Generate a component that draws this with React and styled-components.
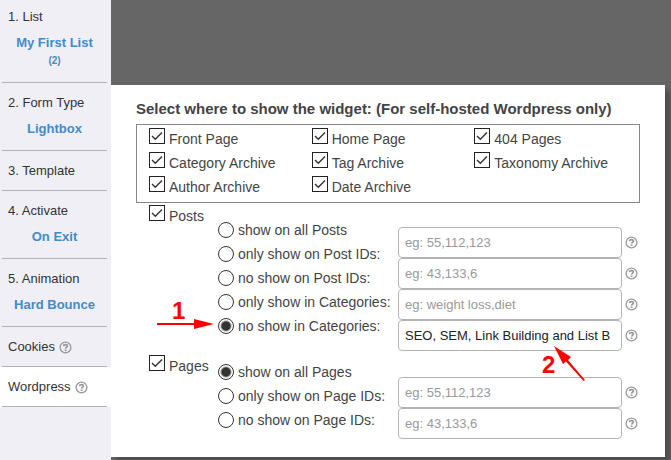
import React from "react";
import styled, { createGlobalStyle } from "styled-components";

const GlobalStyle = createGlobalStyle`
  * {
    box-sizing: border-box;
  }
  body {
    margin: 0;
    background: #666;
    color: #333;
    font-family: "Liberation Sans", Arial, sans-serif;
    font-size: 14px;
    line-height: 22px;
  }
`;

const Page = styled.div`
  display: flex;
  min-height: 100vh;
`;

const Sidebar = styled.nav`
  flex: 0 0 111px;
  background: #f0eff5;
  font-size: 13px;
  line-height: 18px;
`;

const Step = styled.div`
  padding: ${(p) => (p.$first ? "8px" : "11px")} 4px ${(p) => (p.$wide ? "13px" : "11px")} 2px;
  background: ${(p) => (p.$active ? "#fff" : "transparent")};
  position: relative;
  &::after {
    content: "";
    position: absolute;
    left: 2px;
    right: 4px;
    bottom: 0;
    border-bottom: 1px solid #b3b3b3;
  }
`;

const StepTitle = styled.div`
  display: flex;
  align-items: center;
  gap: 4px;
  padding-left: 6px;
`;

const StepLink = styled.a`
  display: block;
  margin-top: 8px;
  color: #428bca;
  font-weight: bold;
  text-align: center;
  text-decoration: none;
`;

const Count = styled.small`
  display: block;
  font-size: 10px;
`;

const Content = styled.main`
  flex: 1;
  min-width: 0;
  padding: 85px 6px 3px 0;
`;

const Panel = styled.section`
  padding: 12px 25px 18px;
  background: #fff;
  box-shadow: 5px 5px 5px rgba(0, 0, 0, 0.25);
`;

const Heading = styled.h1`
  margin: 0 0 3px;
  color: #444;
  font-size: 15px;
  line-height: 24px;
  white-space: nowrap;
`;

const Archives = styled.div`
  display: grid;
  grid-template-columns: repeat(3, 1fr);
  padding: 3px 2px 2px 12px;
  border: 1px solid #888;
`;

const Option = styled.div`
  display: flex;
  align-items: flex-start;
  gap: 4px;
  height: 24px;
  color: #444;
  white-space: nowrap;
`;

const Check = styled.input`
  appearance: none;
  flex: none;
  width: 16px;
  height: 16px;
  margin: 0;
  border: 1px solid #222;
  background: #fff;
  &:checked {
    background: url("data:image/svg+xml,%3Csvg xmlns='http://www.w3.org/2000/svg' viewBox='0 0 14 14'%3E%3Cpath d='M2 7l3.3 3.3L12 3.5' fill='none' stroke='%23333' stroke-width='1.4'/%3E%3C/svg%3E");
  }
`;

const Radio = styled.input`
  appearance: none;
  flex: none;
  width: 16px;
  height: 16px;
  margin: 3px 0 0;
  border: 1px solid #333;
  border-radius: 50%;
  background: #fff;
  &:checked {
    background: radial-gradient(circle, #333 4px, #fff 6px);
  }
`;

const Groups = styled.div`
  position: relative;
  margin-top: 2px;
`;

const Group = styled.div`
  display: grid;
  grid-template-columns: 69px 180px minmax(0, 1fr);
  min-height: ${(p) => (p.$tall ? "150px" : "0")};
  padding: 0 2px 0 13px;
`;

const Radios = styled.div`
  padding-top: ${(p) => (p.$tall ? "14px" : "6px")};
`;

const Fields = styled.div`
  padding-top: 22px;
`;

const Field = styled.div`
  display: flex;
  align-items: center;
  gap: 3px;
`;

const TextBox = styled.input`
  flex: 1;
  min-width: 0;
  height: 31px;
  padding: 0 6px;
  border: 1px solid #b3b3b3;
  border-radius: 4px;
  color: #222;
  font: 13px "Liberation Sans", Arial, sans-serif;
  &::placeholder {
    color: #999;
    opacity: 1;
  }
`;

// red callouts that lie over the form
const Marker = styled.svg`
  position: absolute;
  left: ${(p) => p.$left};
  top: ${(p) => p.$top};
  overflow: visible;
  pointer-events: none;
  fill: #f00;
  font-size: 24px;
  font-weight: bold;
`;

const HelpSvg = styled.svg`
  flex: none;
  display: block;
`;

const Help = () => (
  <HelpSvg width="13" height="13" viewBox="0 0 13 13" fill="none" stroke="#999" role="img" aria-label="Help">
    <circle cx="6.5" cy="6.5" r="5.4" strokeWidth="1.3" />
    <path d="M4.5 5.2C4.6 4.1 5.4 3.6 6.4 3.6c1.2 0 2 .6 2 1.5 0 1.2-1.8 1.2-1.8 2.5" strokeWidth="1.7" />
    <path d="M6.6 8.4v1.6" strokeWidth="1.8" />
  </HelpSvg>
);

const steps = [
  { title: "1. List", value: "My First List", count: "(2)" },
  { title: "2. Form Type", value: "Lightbox" },
  { title: "3. Template" },
  { title: "4. Activate", value: "On Exit" },
  { title: "5. Animation", value: "Hard Bounce" },
  { title: "Cookies", help: true },
  { title: "Wordpress", help: true, active: true },
];

const archives = [
  "Front Page",
  "Home Page",
  "404 Pages",
  "Category Archive",
  "Tag Archive",
  "Taxonomy Archive",
  "Author Archive",
  "Date Archive",
];

const groups = [
  {
    name: "Posts",
    tall: true,
    selected: 4,
    options: [
      "show on all Posts",
      "only show on Post IDs:",
      "no show on Post IDs:",
      "only show in Categories:",
      "no show in Categories:",
    ],
    fields: [
      { hint: "eg: 55,112,123" },
      { hint: "eg: 43,133,6" },
      { hint: "eg: weight loss,diet" },
      { value: "SEO, SEM, Link Building and List B" },
    ],
  },
  {
    name: "Pages",
    selected: 0,
    options: ["show on all Pages", "only show on Page IDs:", "no show on Page IDs:"],
    fields: [{ hint: "eg: 55,112,123" }, { hint: "eg: 43,133,6" }],
  },
];

const CheckOption = ({ label }) => {
  const id = label.toLowerCase().replace(/ /g, "-");
  return (
    <Option>
      <Check type="checkbox" id={id} defaultChecked />
      <label htmlFor={id}>{label}</label>
    </Option>
  );
};

const DisplayGroup = ({ group }) => (
  <Group $tall={group.tall}>
    <CheckOption label={group.name} />
    <Radios $tall={group.tall}>
      {group.options.map((label, i) => (
        <Option key={label}>
          <Radio
            type="radio"
            name={group.name}
            id={`${group.name}-${i}`}
            defaultChecked={i === group.selected}
          />
          <label htmlFor={`${group.name}-${i}`}>{label}</label>
        </Option>
      ))}
    </Radios>
    <Fields>
      {group.fields.map((field, i) => (
        <Field key={i}>
          <TextBox
            type="text"
            aria-label={group.options[i + 1]}
            placeholder={field.hint}
            defaultValue={field.value}
          />
          <Help />
        </Field>
      ))}
    </Fields>
  </Group>
);

const App = () => (
  <>
    <GlobalStyle />
    <Page>
      <Sidebar>
        {steps.map((step, i) => (
          <Step key={step.title} $first={i === 0} $wide={!!step.value} $active={step.active}>
            <StepTitle>
              {step.title}
              {step.help && <Help />}
            </StepTitle>
            {step.value && (
              <StepLink href="#">
                {step.value}
                {step.count && <Count>{step.count}</Count>}
              </StepLink>
            )}
          </Step>
        ))}
      </Sidebar>
      <Content>
        <Panel>
          <Heading>Select where to show the widget: (For self-hosted Wordpress only)</Heading>
          <Archives>
            {archives.map((label) => (
              <CheckOption key={label} label={label} />
            ))}
          </Archives>
          <Groups>
            {groups.map((group) => (
              <DisplayGroup key={group.name} group={group} />
            ))}
            <Marker $left="21px" $top="94px" width="58" height="34">
              <text x="15" y="20">1</text>
              <path d="M0 24h37v-4l20 5-20 5v-4H0z" />
            </Marker>
            <Marker $left="calc(100% - 98px)" $top="140px" width="50" height="40">
              <text x="0" y="28">2</text>
              <path d="M12 1l17 11-3 3 17 20-1.5 1L24 16.500l-3 2.500z" />
            </Marker>
          </Groups>
        </Panel>
      </Content>
    </Page>
  </>
);

export default App;
